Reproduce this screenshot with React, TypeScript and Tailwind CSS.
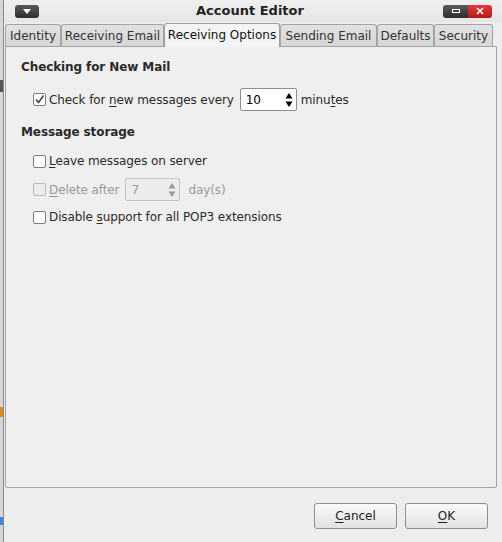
import React from "react";

const font = { fontFamily: '"DejaVu Sans", "Liberation Sans", sans-serif' };

function Check({ checked, disabled }: { checked?: boolean; disabled?: boolean }) {
  return (
    <div
      className={`w-[13px] h-[13px] rounded-[2px] border flex items-center justify-center shrink-0 ${
        disabled ? "border-[#b8b8b8] bg-[#ececec]" : "border-[#7d7d7d] bg-white"
      }`}
    >
      {checked && (
        <svg width="11" height="11" viewBox="0 0 11 11">
          <path d="M2 5.5 L4.5 8.5 L9.5 1.5" fill="none" stroke="#3a3a3a" strokeWidth="1.4" />
        </svg>
      )}
    </div>
  );
}

function Spin({ value, width, disabled }: { value: string; width: number; disabled?: boolean }) {
  const c = disabled ? "#9a9a9a" : "#000";
  return (
    <div
      className={`h-[23px] rounded-[2px] border flex items-center justify-between pl-[5px] pr-[3px] ${
        disabled ? "border-[#c4c4c4] bg-[#ececec] text-[#9a9a9a]" : "border-[#8e8e8e] bg-white text-black"
      }`}
      style={{ width }}
    >
      <span>{value}</span>
      <svg width="8" height="16" viewBox="0 0 8 16">
        <path d="M4 1 L7.5 6.5 L0.5 6.5 Z" fill={c} />
        <path d="M4 15 L7.5 9.5 L0.5 9.5 Z" fill={c} />
      </svg>
    </div>
  );
}

function Tab({ label, selected, w }: { label: string; selected?: boolean; w: number }) {
  return (
    <div
      className={`flex items-center justify-center border border-b-0 rounded-t-[3px] whitespace-nowrap shrink-0 ${
        selected
          ? "h-[24px] pb-[1px] bg-[#f4f4f4] border-[#9e9e9e] text-[#111] relative z-10 -mb-[1px]"
          : "h-[22px] bg-gradient-to-b from-[#e2e2e2] to-[#d6d6d6] border-[#a4a4a4] text-[#333]"
      }`}
      style={{ width: w }}
    >
      {label}
    </div>
  );
}

export default function App() {
  return (
    <div className="w-[502px] h-[542px] flex overflow-hidden bg-[#ededed] text-[12px]" style={font}>
      <div className="w-[3px] h-full flex flex-col bg-[#d6d6d6] shrink-0">
        <div className="h-[80px]" />
        <div className="h-[12px] bg-[#555]" />
        <div className="h-[315px]" />
        <div className="h-[10px] bg-[#e08a20]" />
        <div className="h-[100px]" />
        <div className="h-[8px] bg-[#3b8ad0]" />
      </div>
      <div className="flex-1 flex flex-col border-l border-[#8a8a8a] bg-[#ededed]">
        {/* title bar */}
        <div className="h-[22px] shrink-0 flex items-center relative bg-gradient-to-b from-[#f0f0f0] to-[#e6e6e6]">
          <div className="ml-[11px] w-[24px] h-[13px] rounded-[3px] bg-gradient-to-b from-[#5a5a5a] to-[#2e2e2e] flex items-center justify-center">
            <svg width="8" height="5" viewBox="0 0 8 5">
              <path d="M0 0 L8 0 L4 5 Z" fill="#fff" />
            </svg>
          </div>
          <div className="flex-1 text-center font-bold text-[13px] text-[#222] pl-[18px]">Account Editor</div>
          <div className="mr-[10px] flex h-[13px] rounded-[3px] overflow-hidden">
            <div className="w-[25px] bg-gradient-to-b from-[#5a5a5a] to-[#2e2e2e] flex items-center justify-center">
              <div className="w-[8px] h-[4px] border border-white" />
            </div>
            <div className="w-[24px] bg-gradient-to-b from-[#e23a3a] to-[#b51717] flex items-center justify-center">
              <svg width="8" height="8" viewBox="0 0 8 8">
                <path d="M1 1 L7 7 M7 1 L1 7" stroke="#fff" strokeWidth="1.6" />
              </svg>
            </div>
          </div>
        </div>
        {/* tabs */}
        <div className="h-[24px] shrink-0 flex items-end pl-[1px]">
          <Tab label="Identity" w={56} />
          <Tab label="Receiving Email" w={103} />
          <Tab label="Receiving Options" w={116} selected />
          <Tab label="Sending Email" w={97} />
          <Tab label="Defaults" w={57} />
          <Tab label="Security" w={59} />
        </div>
        {/* panel */}
        <div className="ml-[1px] mr-[5px] h-[442px] shrink-0 border border-[#a4a4a4] rounded-b-[2px] bg-[#efefef] text-[#2a2a2a] tracking-[-0.1px]">
          <div className="pl-[15px] pt-[10px] font-bold text-[#2a2a2a] h-[30px] leading-[20px]">Checking for New Mail</div>
          <div className="pl-[27px] mt-[11px] flex items-center h-[23px]">
            <Check checked />
            <span className="ml-[3px] whitespace-nowrap">
              Check for <u className="underline-offset-2">n</u>ew messages every
            </span>
            <div className="ml-[6px]">
              <Spin value="10" width={57} />
            </div>
            <span className="ml-[4px] whitespace-nowrap">
              minu<u className="underline-offset-2">t</u>es
            </span>
          </div>
          <div className="pl-[15px] mt-[11px] font-bold h-[20px] leading-[20px]">Message storage</div>
          <div className="pl-[27px] mt-[9px] flex items-center h-[20px]">
            <Check />
            <span className="ml-[3px]">
              <u className="underline-offset-2">L</u>eave messages on server
            </span>
          </div>
          <div className="pl-[27px] mt-[7px] flex items-center h-[23px] text-[#9a9a9a]">
            <Check disabled />
            <span className="ml-[3px]">
              <u className="underline-offset-2">D</u>elete after
            </span>
            <div className="ml-[6px]">
              <Spin value="7" width={55} disabled />
            </div>
            <span className="ml-[8px]">day(s)</span>
          </div>
          <div className="pl-[27px] mt-[6px] flex items-center h-[20px]">
            <Check />
            <span className="ml-[3px]">
              Disable <u className="underline-offset-2">s</u>upport for all POP3 extensions
            </span>
          </div>
        </div>
        {/* buttons */}
        <div className="flex justify-end pr-[14px] pt-[15px] gap-[8px]">
          <div className="w-[83px] h-[26px] rounded-[3px] border border-[#8f8f8f] bg-gradient-to-b from-[#fafafa] to-[#e2e2e2] flex items-center justify-center text-[#222]">
            <span>
              <u className="underline-offset-2">C</u>ancel
            </span>
          </div>
          <div className="w-[83px] h-[26px] rounded-[3px] border border-[#8f8f8f] bg-gradient-to-b from-[#fafafa] to-[#e2e2e2] flex items-center justify-center text-[#222]">
            <span>
              <u className="underline-offset-2">O</u>K
            </span>
          </div>
        </div>
      </div>
    </div>
  );
}
